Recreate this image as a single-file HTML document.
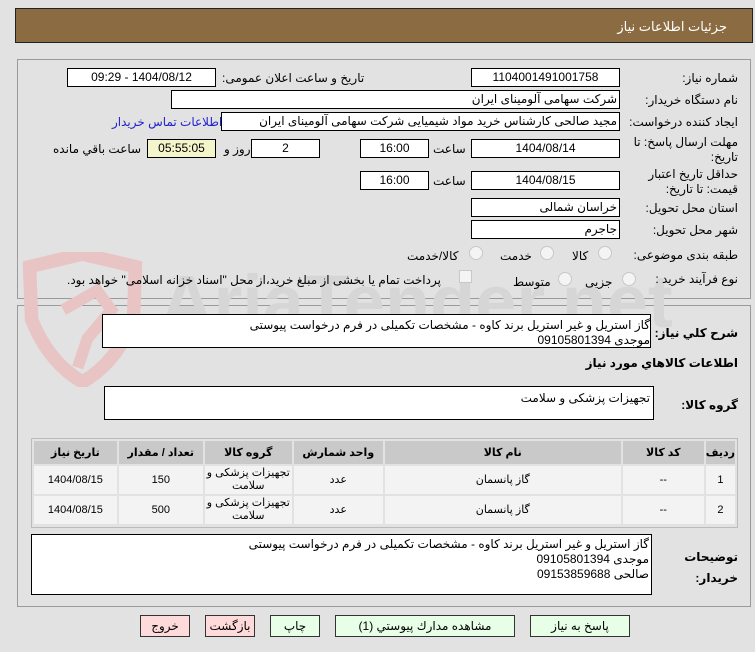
<!DOCTYPE html>
<html><head><meta charset="utf-8"><style>
body{margin:0;width:755px;height:652px;background:#e2e2e2;font-family:"Liberation Sans","DejaVu Sans",sans-serif;font-size:12px;color:#000;position:relative;overflow:hidden;direction:rtl}
div,span{position:absolute;box-sizing:border-box}
.b{background:#fff;border:1px solid #000;height:19px;line-height:17px;text-align:center;white-space:nowrap;overflow:hidden}
.l{white-space:nowrap;line-height:16px}
.p{border:1px solid #9a9a9a;background:#e2e2e2}
.r{width:14px;height:14px;border-radius:50%;border:1px solid #c8c8c8;background:#f4f4f4}
.btn{height:22px;border:1px solid #333;line-height:20px;text-align:center;font-size:12px;background:#e6ffe6}
.pk{background:#ffdada}
table{position:absolute;border-collapse:separate;border-spacing:2px;font-size:11px;direction:rtl}
td,th{text-align:center;background:#f3f3f3;padding:0}
th{background:#c9c9c9;height:23px;font-weight:bold}
td{height:28px;line-height:13px}
</style></head><body>
<div style="left:15px;top:8px;width:738px;height:35px;background:#8b6c42;border:1px solid #222"></div>
<div class="l" style="right:28px;top:19px;color:#fff;font-size:13px">جزئیات اطلاعات نیاز</div>

<div class="p" style="left:17px;top:59px;width:734px;height:240px"></div>
<div class="p" style="left:17px;top:305px;width:734px;height:302px"></div>

<!-- watermark -->
<svg style="position:absolute;left:20px;top:252px" width="125" height="135" viewBox="0 0 130 140"><path d="M10 15 L65 2 L120 15 L118 70 Q100 115 65 135 Q30 115 12 70 Z" fill="none" stroke="#e8c4c4" stroke-width="14"/><path d="M45 60 L80 40 L95 60 L70 90 L60 120" fill="none" stroke="#e8c4c4" stroke-width="12"/></svg>
<div class="l" style="left:160px;top:262px;font-size:74px;line-height:80px;color:#d6d6d6;font-weight:bold;direction:ltr">AriaTender.net</div>

<div class="l" style="right:17px;top:70px">شماره نیاز:</div>
<div class="b" style="left:471px;top:68px;width:149px">1104001491001758</div>
<div class="l" style="left:222px;top:70px">تاریخ و ساعت اعلان عمومی:</div>
<div class="b" style="left:67px;top:68px;width:149px">1404/08/12 - 09:29</div>

<div class="l" style="right:17px;top:92px">نام دستگاه خریدار:</div>
<div class="b" style="left:171px;top:90px;width:449px;text-align:right;padding-right:2px">شرکت سهامی آلومینای ایران</div>

<div class="l" style="right:17px;top:114px">ایجاد کننده درخواست:</div>
<div class="b" style="left:221px;top:112px;width:399px;text-align:right;padding-right:2px">مجید صالحی کارشناس خرید مواد شیمیایی شرکت سهامی آلومینای ایران</div>
<div class="l" style="left:112px;top:114px;color:#2222cc">اطلاعات تماس خریدار</div>

<div class="l" style="right:17px;top:135px;width:115px;text-align:right;line-height:15px;white-space:normal">مهلت ارسال پاسخ: تا تاریخ:</div>
<div class="b" style="left:471px;top:139px;width:149px">1404/08/14</div>
<div class="l" style="left:433px;top:141px">ساعت</div>
<div class="b" style="left:360px;top:139px;width:69px">16:00</div>
<div class="b" style="left:251px;top:139px;width:69px">2</div>
<div class="l" style="left:224px;top:141px">روز و</div>
<div class="b" style="left:147px;top:139px;width:69px;background:#f5f5cc">05:55:05</div>
<div class="l" style="left:53px;top:141px">ساعت باقي مانده</div>

<div class="l" style="right:17px;top:167px;width:110px;text-align:right;line-height:15px;white-space:normal">حداقل تاریخ اعتبار قیمت: تا تاریخ:</div>
<div class="b" style="left:471px;top:171px;width:149px">1404/08/15</div>
<div class="l" style="left:433px;top:173px">ساعت</div>
<div class="b" style="left:360px;top:171px;width:69px">16:00</div>

<div class="l" style="right:17px;top:200px">استان محل تحویل:</div>
<div class="b" style="left:471px;top:198px;width:149px;text-align:right;padding-right:2px">خراسان شمالی</div>
<div class="l" style="right:17px;top:222px">شهر محل تحویل:</div>
<div class="b" style="left:471px;top:220px;width:149px;text-align:right;padding-right:2px">جاجرم</div>

<div class="l" style="right:17px;top:247px">طبقه بندی موضوعی:</div>
<div class="r" style="left:598px;top:246px"></div><div class="l" style="left:572px;top:248px">كالا</div>
<div class="r" style="left:540px;top:246px"></div><div class="l" style="left:500px;top:248px">خدمت</div>
<div class="r" style="left:469px;top:246px"></div><div class="l" style="left:407px;top:248px">كالا/خدمت</div>

<div class="l" style="right:17px;top:271px">نوع فرآیند خرید :</div>
<div class="r" style="left:622px;top:272px"></div><div class="l" style="left:585px;top:274px">جزیی</div>
<div class="r" style="left:558px;top:272px"></div><div class="l" style="left:513px;top:274px">متوسط</div>
<div style="left:459px;top:270px;width:13px;height:13px;border:1px solid #c8c8c8;background:#f4f4f4"></div>
<div class="l" style="left:67px;top:272px">پرداخت تمام یا بخشی از مبلغ خرید،از محل "اسناد خزانه اسلامی" خواهد بود.</div>

<div class="l" style="right:17px;top:325px;font-weight:bold">شرح كلي نياز:</div>
<div style="left:102px;top:314px;width:549px;height:34px;background:#fff;border:1px solid #000"></div>
<div class="l" style="right:105px;top:318px;line-height:15px;text-align:right">گاز استریل و غیر استریل برند کاوه - مشخصات تکمیلی در فرم درخواست پیوستی<br>موجدی 09105801394</div>
<div class="l" style="right:17px;top:355px;font-weight:bold">اطلاعات كالاهاي مورد نياز</div>
<div class="l" style="right:17px;top:397px;font-weight:bold">گروه کالا:</div>
<div style="left:104px;top:386px;width:550px;height:34px;background:#fff;border:1px solid #000"></div>
<div class="l" style="right:105px;top:390px">تجهیزات پزشکی و سلامت</div>

<div style="left:31px;top:438px;width:707px;height:90px;border:1px solid #bbb"></div>
<table style="left:32px;top:439px;width:705px">
<tr><th style="width:28px">رديف</th><th style="width:81px">کد کالا</th><th style="width:236px">نام کالا</th><th style="width:89px">واحد شمارش</th><th style="width:87px">گروه کالا</th><th style="width:84px">تعداد / مقدار</th><th>تاریخ نیاز</th></tr>
<tr><td>1</td><td>--</td><td>گاز پانسمان</td><td>عدد</td><td>تجهیزات پزشکی و سلامت</td><td>150</td><td>1404/08/15</td></tr>
<tr><td>2</td><td>--</td><td>گاز پانسمان</td><td>عدد</td><td>تجهیزات پزشکی و سلامت</td><td>500</td><td>1404/08/15</td></tr>
</table>

<div class="l" style="right:17px;top:547px;font-weight:bold;line-height:21px;text-align:right">توضيحات<br>خريدار:</div>
<div style="left:31px;top:534px;width:621px;height:61px;background:#fff;border:1px solid #000"></div>
<div class="l" style="right:106px;top:537px;line-height:15px;text-align:right">گاز استریل و غیر استریل برند کاوه - مشخصات تکمیلی در فرم درخواست پیوستی<br>موجدی 09105801394<br>صالحی 09153859688</div>

<div class="btn" style="left:530px;top:615px;width:100px">پاسخ به نياز</div>
<div class="btn" style="left:335px;top:615px;width:180px">مشاهده مدارك پيوستي (1)</div>
<div class="btn" style="left:270px;top:615px;width:50px">چاپ</div>
<div class="btn pk" style="left:205px;top:615px;width:50px">بازگشت</div>
<div class="btn pk" style="left:140px;top:615px;width:50px">خروج</div>
</body></html>
